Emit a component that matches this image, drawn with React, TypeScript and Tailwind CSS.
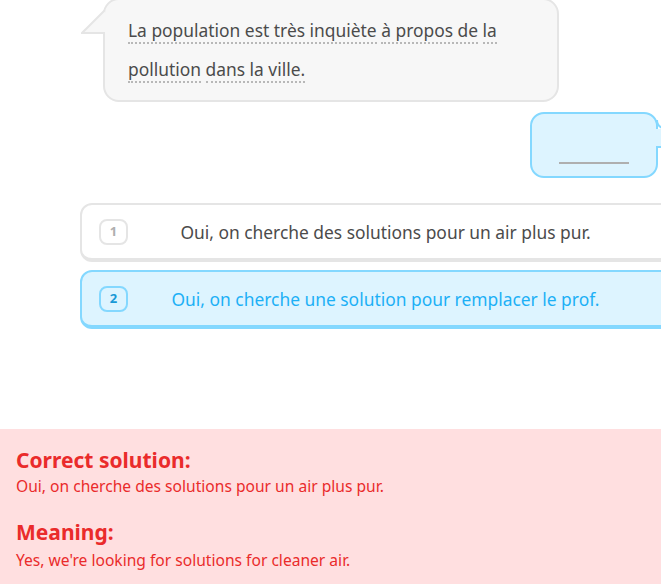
import React from "react";

const font = { fontFamily: "'Noto Sans', Lato, sans-serif" };

function Dotted({ children }: { children: React.ReactNode }) {
  return <span className="border-b-2 border-dotted border-[#b8b8b8]">{children}</span>;
}

export default function App() {
  return (
    <div className="relative flex h-[584px] w-[661px] flex-col overflow-hidden bg-white" style={font}>
      {/* Speech bubble */}
      <div className="relative ml-[103px] mt-[-2px] h-[104px] w-[456px] rounded-[16px] border-2 border-[#e5e5e5] bg-[#f7f7f7] pl-[23px] pt-[11px] text-[17.4px] leading-[39px] text-[#4b4b4b]">
        <svg className="absolute left-[-24px] top-[9px]" width="24" height="28" viewBox="0 0 24 28">
          <path d="M24 1 L1 24 L24 24 Z" fill="#f7f7f7" />
          <path d="M24 1 L1 24 L24 24" fill="none" stroke="#e5e5e5" strokeWidth="2" />
        </svg>
        <p>
          <Dotted>La population est très inquiète</Dotted> <Dotted>à propos de</Dotted> <Dotted>la</Dotted>
          <br />
          <Dotted>pollution</Dotted> <Dotted>dans la ville.</Dotted>
        </p>
      </div>

      {/* Answer bubble */}
      <div className="relative ml-[530px] mt-[10px] h-[66px] w-[128px] rounded-[14px] border-2 border-[#84d8ff] bg-[#ddf4ff] pl-[27px] pt-[48px]">
        <div className="h-[2px] w-[70px] bg-[#afafaf]" />
        <svg className="absolute left-[124px] top-[6px]" width="14" height="30" viewBox="0 0 14 30">
          <rect x="0" y="9" width="14" height="18" fill="#ddf4ff" />
          <path d="M1 0 Q 1 9 14 9" fill="none" stroke="#84d8ff" strokeWidth="2" />
          <path d="M0 27 L14 27" fill="none" stroke="#84d8ff" strokeWidth="2" />
        </svg>
      </div>

      {/* Choices */}
      <div className="ml-[80px] mt-[25px] flex flex-col gap-[8px]">
        <div className="flex h-[59px] w-[611px] items-center rounded-[12px] border-x-2 border-t-2 border-b-4 border-[#e5e5e5] bg-white pl-[17px]">
          <div className="flex h-[26px] w-[29px] items-center justify-center rounded-[8px] border-2 border-[#e5e5e5] text-[13px] font-bold text-[#afafaf]">
            1
          </div>
          <div className="flex-1 text-center text-[17.4px] leading-[24px] text-[#4b4b4b]">
            Oui, on cherche des solutions pour un air plus pur.
          </div>
          <div className="w-[46px]" />
        </div>
        <div className="flex h-[59px] w-[611px] items-center rounded-[12px] border-x-2 border-t-2 border-b-4 border-[#84d8ff] bg-[#ddf4ff] pl-[17px]">
          <div className="flex h-[26px] w-[29px] items-center justify-center rounded-[8px] border-2 border-[#84d8ff] text-[13px] font-bold text-[#1899d6]">
            2
          </div>
          <div className="flex-1 text-center text-[17.4px] leading-[24px] text-[#1cb0f6]">
            Oui, on cherche une solution pour remplacer le prof.
          </div>
          <div className="w-[46px]" />
        </div>
      </div>

      {/* Feedback */}
      <div className="mt-auto h-[155px] w-full bg-[#ffdfe0] pl-[16px] pt-[18px] text-[#ea2b2b]">
        <div className="text-[21px] font-bold leading-[26px]">Correct solution:</div>
        <div className="mt-[3px] text-[15.6px] leading-[20px]">Oui, on cherche des solutions pour un air plus pur.</div>
        <div className="mt-[23px] text-[21px] font-bold leading-[26px]">Meaning:</div>
        <div className="mt-[5px] text-[15.6px] leading-[20px]">Yes, we're looking for solutions for cleaner air.</div>
      </div>
    </div>
  );
}
